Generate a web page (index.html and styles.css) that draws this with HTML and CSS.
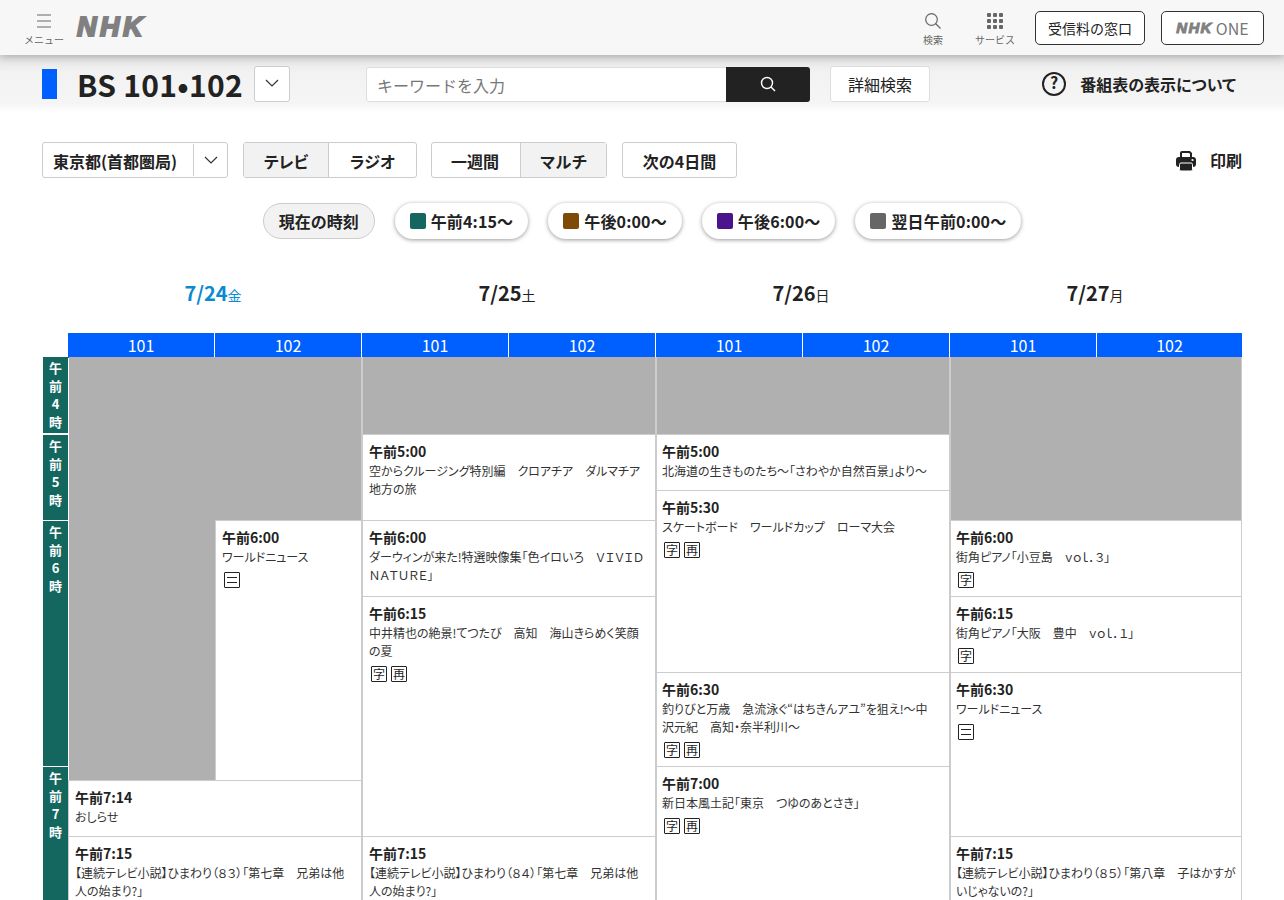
FILE: index.html
```html
<!DOCTYPE html>
<html lang="ja">
<head>
  <meta charset="UTF-8">
  <meta name="viewport" content="width=device-width, initial-scale=1">
  <title>番組表 BS 101・102</title>
  <link rel="stylesheet" href="styles.css">
</head>
<body>

  <header class="topbar">
    <a class="top-icon menu">
      <svg width="16" height="16" viewBox="0 0 16 16" fill="none" stroke="#666" stroke-width="1.2"><path d="M1 2h14M1 8h14M1 14h14"/></svg>
      <span>メニュー</span>
    </a>
    <a class="logo">NHK</a>
    <div class="top-right">
      <a class="top-icon search">
        <svg width="16" height="16" viewBox="0 0 16 16" fill="none" stroke="#666" stroke-width="1.2"><circle cx="6.500" cy="6.500" r="5.800"/><path d="M10.500 10.500l5 5"/></svg>
        <span>検索</span>
      </a>
      <a class="top-icon service">
        <svg width="16" height="16" viewBox="0 0 16 16" fill="#666"><rect x="0" y="0" width="4" height="4" rx="1"/><rect x="6" y="0" width="4" height="4" rx="1"/><rect x="12" y="0" width="4" height="4" rx="1"/><rect x="0" y="6" width="4" height="4" rx="1"/><rect x="6" y="6" width="4" height="4" rx="1"/><rect x="12" y="6" width="4" height="4" rx="1"/><rect x="0" y="12" width="4" height="4" rx="1"/><rect x="6" y="12" width="4" height="4" rx="1"/><rect x="12" y="12" width="4" height="4" rx="1"/></svg>
        <span>サービス</span>
      </a>
      <a class="top-btn fee">受信料の窓口</a>
      <a class="top-btn one"><b class="logo small">NHK</b>ONE</a>
    </div>
  </header>

  <section class="subbar">
    <span class="ch-mark"></span>
    <h1>BS 101•102</h1>
    <button class="ch-select">
      <svg class="chev" width="16" height="9" viewBox="0 0 16 9" fill="none" stroke="#333" stroke-width="1.2"><path d="M2 1l6 6 6-6"/></svg>
    </button>
    <div class="searchbox">
      <span class="placeholder">キーワードを入力</span>
      <button class="search-go">
        <svg width="16" height="16" viewBox="0 0 16 16" fill="none" stroke="#fff" stroke-width="1.4"><circle cx="7" cy="7" r="5.500"/><path d="M11 11l4 4"/></svg>
      </button>
    </div>
    <button class="detail">詳細検索</button>
    <a class="about">
      <svg width="24" height="24" viewBox="0 0 24 24" fill="none" stroke="#222" stroke-width="2"><circle cx="12" cy="12" r="11"/><text x="12" y="17" text-anchor="middle" class="about-q">?</text></svg>
      番組表の表示について
    </a>
  </section>

  <section class="filters">
    <div class="box area">
      <span class="area-name">東京都(首都圏局)</span>
      <span class="area-open">
        <svg width="16" height="9" viewBox="0 0 16 9" fill="none" stroke="#333" stroke-width="1.2"><path d="M2 1l6 6 6-6"/></svg>
      </span>
    </div>
    <div class="box seg media">
      <span class="on">テレビ</span>
      <span>ラジオ</span>
    </div>
    <div class="box seg range">
      <span>一週間</span>
      <span class="on">マルチ</span>
    </div>
    <div class="box seg next"><span>次の4日間</span></div>
    <a class="print">
      <svg width="20" height="21" viewBox="0 0 20 21"><path d="M5 8V3a1 1 0 0 1 1-1h7.500L15 3.500V8" fill="none" stroke="#222" stroke-width="2"/><rect x="0" y="7" width="20" height="10" rx="3" fill="#222"/><rect x="3.500" y="13" width="13" height="8" rx="1.500" fill="#222" stroke="#fff" stroke-width="1"/><circle cx="16.500" cy="10" r="1.100" fill="#fff"/></svg>
      印刷
    </a>
  </section>

  <nav class="jumps">
    <a class="pill now">現在の時刻</a>
    <a class="pill"><i class="sw green"></i>午前4:15〜</a>
    <a class="pill"><i class="sw brown"></i>午後0:00〜</a>
    <a class="pill"><i class="sw purple"></i>午後6:00〜</a>
    <a class="pill"><i class="sw gray"></i>翌日午前0:00〜</a>
  </nav>

  <div class="days">
    <div class="day today">7/24<small>金</small></div>
    <div class="day">7/25<small>土</small></div>
    <div class="day">7/26<small>日</small></div>
    <div class="day">7/27<small>月</small></div>
  </div>

  <div class="channels">
    <span>101</span><span>102</span>
    <span>101</span><span>102</span>
    <span>101</span><span>102</span>
    <span>101</span><span>102</span>
  </div>

  <main class="schedule">
    <div class="hour h4">午前4時</div>
    <div class="hour h5">午前5時</div>
    <div class="hour h6">午前6時</div>
    <div class="hour h7">午前7時</div>

    <!-- 7/24 -->
    <div class="none c1 a415 to714"></div>
    <div class="none c2 a415 to600"></div>
    <article class="prog c2 a600 to714">
      <h3>午前6:00</h3>
      <p>ワールドニュース</p>
      <div class="marks"><i class="mark two"><span></span></i></div>
    </article>
    <article class="prog d1 a714 to715">
      <h3>午前7:14</h3>
      <p>おしらせ</p>
    </article>
    <article class="prog d1 a715 toend">
      <h3>午前7:15</h3>
      <p>【連続テレビ小説】ひまわり（８３）「第七章　兄弟は他人の始まり?」</p>
    </article>

    <!-- 7/25 -->
    <div class="none d2 a415 to500"></div>
    <article class="prog d2 a500 to600">
      <h3>午前5:00</h3>
      <p>空からクルージング特別編　クロアチア　ダルマチア地方の旅</p>
    </article>
    <article class="prog d2 a600 to615">
      <h3>午前6:00</h3>
      <p>ダーウィンが来た!特選映像集「色イロいろ　ＶＩＶＩＤ　ＮＡＴＵＲＥ」</p>
    </article>
    <article class="prog d2 a615 to715">
      <h3>午前6:15</h3>
      <p>中井精也の絶景!てつたび　高知　海山きらめく笑顔の夏</p>
      <div class="marks"><i class="mark">字</i><i class="mark">再</i></div>
    </article>
    <article class="prog d2 a715 toend">
      <h3>午前7:15</h3>
      <p>【連続テレビ小説】ひまわり（８４）「第七章　兄弟は他人の始まり?」</p>
    </article>

    <!-- 7/26 -->
    <div class="none d3 a415 to500"></div>
    <article class="prog d3 a500 to530">
      <h3>午前5:00</h3>
      <p>北海道の生きものたち〜「さわやか自然百景」より〜</p>
    </article>
    <article class="prog d3 a530 to630">
      <h3>午前5:30</h3>
      <p>スケートボード　ワールドカップ　ローマ大会</p>
      <div class="marks"><i class="mark">字</i><i class="mark">再</i></div>
    </article>
    <article class="prog d3 a630 to700">
      <h3>午前6:30</h3>
      <p>釣りびと万歳　急流泳ぐ“はちきんアユ”を狙え!〜中沢元紀　高知・奈半利川〜</p>
      <div class="marks"><i class="mark">字</i><i class="mark">再</i></div>
    </article>
    <article class="prog d3 a700 toend">
      <h3>午前7:00</h3>
      <p>新日本風土記「東京　つゆのあとさき」</p>
      <div class="marks"><i class="mark">字</i><i class="mark">再</i></div>
    </article>

    <!-- 7/27 -->
    <div class="none d4 a415 to600"></div>
    <article class="prog d4 a600 to615">
      <h3>午前6:00</h3>
      <p>街角ピアノ「小豆島　ｖｏｌ．３」</p>
      <div class="marks"><i class="mark">字</i></div>
    </article>
    <article class="prog d4 a615 to630">
      <h3>午前6:15</h3>
      <p>街角ピアノ「大阪　豊中　ｖｏｌ．１」</p>
      <div class="marks"><i class="mark">字</i></div>
    </article>
    <article class="prog d4 a630 to715">
      <h3>午前6:30</h3>
      <p>ワールドニュース</p>
      <div class="marks"><i class="mark two"><span></span></i></div>
    </article>
    <article class="prog d4 a715 toend">
      <h3>午前7:15</h3>
      <p>【連続テレビ小説】ひまわり（８５）「第八章　子はかすがいじゃないの?」</p>
    </article>
  </main>

</body>
</html>
```

FILE: styles.css
```css
* {
  box-sizing: border-box;
}

html, body {
  height: 900px;
  overflow: hidden;
}

body {
  margin: 0;
  background: #fff;
  color: #222;
  font-family: "Noto Sans CJK JP", "Noto Sans", sans-serif;
  font-size: 16px;
}

button {
  font-family: inherit;
  cursor: pointer;
}

/* top bar */
.topbar {
  position: relative;
  z-index: 2;
  display: flex;
  align-items: center;
  height: 55px;
  padding: 0 20px 0 24px;
  background: #f7f7f7;
  box-shadow: 0 2px 8px rgba(0, 0, 0, 0.25);
}

.top-icon {
  display: flex;
  flex-direction: column;
  align-items: center;
  gap: 5px;
  color: #666;
  font-size: 10px;
  line-height: 12px;
}

.menu {
  width: 40px;
  margin-top: 3px;
}

.logo {
  margin-left: 13px;
  color: #808080;
  font-family: "Liberation Sans", sans-serif;
  font-size: 27px;
  font-weight: 700;
  font-style: italic;
  letter-spacing: 3.5px;
  -webkit-text-stroke: 2px #808080;
}

.logo.small {
  margin: 0 3px 0 0;
  font-size: 15px;
  letter-spacing: 1.3px;
  -webkit-text-stroke: 1px #808080;
}

.top-right {
  display: flex;
  align-items: center;
  margin-left: auto;
}

.search {
  width: 24px;
  margin-right: 30px;
  margin-top: 3px;
}

.service {
  width: 40px;
  margin-right: 20px;
  margin-top: 3px;
}

.top-btn {
  display: flex;
  align-items: center;
  justify-content: center;
  height: 34px;
  border: 1px solid #333;
  border-radius: 5px;
  background: #fff;
  font-size: 14px;
}

.fee {
  width: 110px;
  margin-right: 16px;
}

.one {
  width: 103px;
  color: #777;
  font-size: 16px;
}

/* channel bar */
.subbar {
  display: flex;
  align-items: center;
  height: 57px;
  padding: 0 48px 0 42px;
  background: linear-gradient(#e4e4e4, #f2f2f2 30%, #f5f5f5 85%, #fff);
}

.ch-mark {
  width: 15px;
  height: 30px;
  background: #0060ff;
}

.subbar h1 {
  margin: 0 0 0 20px;
  font-size: 30px;
  font-weight: 700;
  letter-spacing: 0.3px;
  line-height: 36px;
  white-space: nowrap;
}

.ch-select {
  display: flex;
  align-items: center;
  justify-content: center;
  width: 36px;
  height: 36px;
  margin-left: 11px;
  padding: 0;
  border: 1px solid #ccc;
  border-radius: 3px;
  background: #fff;
}

.searchbox {
  display: flex;
  width: 444px;
  height: 35px;
  margin: 1px 0 0 76px;
  border: 1px solid #ddd;
  border-radius: 3px;
  background: #fff;
}

.placeholder {
  flex: 1;
  padding: 0 10px;
  color: #777;
  font-size: 16px;
  line-height: 35px;
}

.search-go {
  display: flex;
  align-items: center;
  justify-content: center;
  width: 84px;
  margin: -1px;
  padding: 0;
  border: none;
  border-radius: 0 3px 3px 0;
  background: #222;
}

.detail {
  width: 100px;
  height: 36px;
  margin-left: 20px;
  border: 1px solid #ddd;
  border-radius: 3px;
  background: #fff;
  color: #222;
  font-size: 16px;
}

.about {
  display: flex;
  align-items: center;
  gap: 14px;
  margin-left: auto;
  font-weight: 700;
  font-feature-settings: "palt";
  white-space: nowrap;
}

.about svg {
  overflow: visible;
}

.about-q {
  fill: #222;
  stroke: none;
  font-size: 16px;
  font-weight: 700;
}

/* filter row */
.filters {
  display: flex;
  align-items: center;
  height: 36px;
  margin-top: 30px;
  padding: 0 42px;
}

.box {
  display: flex;
  height: 36px;
  border: 1px solid #ccc;
  border-radius: 3px;
  font-weight: 700;
  line-height: 36px;
}

.area {
  width: 186px;
}

.area-name {
  width: 150px;
  padding-left: 10px;
  white-space: nowrap;
}

.area-open {
  display: flex;
  align-items: center;
  justify-content: center;
  flex: 1;
  margin: 1px 0;
  border-left: 1px solid #ccc;
}

.seg span {
  flex: 1;
  text-align: center;
}

.seg span + span {
  border-left: 1px solid #ccc;
}

.seg .on {
  background: #f2f2f2;
}

.media {
  width: 174px;
  margin-left: 15px;
  font-feature-settings: "palt";
}

.media span:first-child {
  flex: none;
  width: 84px;
}

.range {
  width: 176px;
  margin-left: 14px;
}

.range span:first-child {
  flex: none;
  width: 88px;
  padding-right: 2px;
}

.next {
  width: 115px;
  margin-left: 15px;
}

.print {
  display: flex;
  align-items: center;
  gap: 14px;
  margin-left: auto;
  font-weight: 700;
}

/* time jump pills */
.jumps {
  display: flex;
  justify-content: center;
  gap: 20px;
  margin-top: 25px;
}

.pill {
  display: flex;
  align-items: center;
  height: 36px;
  padding: 0 15px;
  border-radius: 18px;
  background: #fff;
  box-shadow: 0 1px 4px rgba(0, 0, 0, 0.4);
  font-weight: 700;
  letter-spacing: 0.15px;
  white-space: nowrap;
}

.pill.now {
  border: 1px solid #ccc;
  background: #f2f2f2;
  box-shadow: none;
  letter-spacing: 0;
}

.sw {
  width: 16px;
  height: 16px;
  margin-right: 5px;
  border-radius: 2px;
}

.green { background: #14675f; }
.brown { background: #7f4a05; }
.purple { background: #4a148c; }
.gray { background: #666; }

/* days */
.days {
  display: grid;
  grid-template-columns: repeat(4, 294px);
  height: 32px;
  margin: 38px 0 0 66px;
}

.day {
  text-align: center;
  font-size: 20px;
  font-weight: 700;
  line-height: 32px;
}

.day small {
  font-size: 14px;
  font-weight: 400;
}

.today {
  color: #0a8ad0;
}

.channels {
  display: grid;
  grid-template-columns: repeat(7, 147px) 145px;
  height: 24px;
  margin: 24px 0 0 68px;
}

.channels span {
  border-right: 1px solid #fff;
  background: #0060ff;
  color: #fff;
  text-align: center;
  font-size: 16px;
  line-height: 25px;
}

.channels span:last-child {
  border-right: none;
}

/* schedule grid, row heights follow the program blocks */
.schedule {
  display: grid;
  grid-template-columns: 26px repeat(7, 147px) 145px;
  grid-template-rows:
    [t415] 77px [t500] 56px [t530] 30px [t600] 76px [t615] 76px [t630]
    94px [t700] 14px [t714] 56px [t715] 120px [tend];
  margin: 0 42px;
}

.hour {
  width: 25px;
  margin-top: 1px;
  margin-left: 1px;
  padding: 2px 5px 0;
  background: #14675f;
  color: #fff;
  text-align: center;
  font-size: 13px;
  font-weight: 700;
  line-height: 18px;
  word-break: break-all;
}

.h4 { grid-column: 1; grid-row: t415 / t500; margin-top: 0; margin-bottom: 1px; }
.h5 { grid-column: 1; grid-row: t500 / t600; }
.h6 { grid-column: 1; grid-row: t600 / t700; }
.h7 { grid-column: 1; grid-row: t700 / tend; }

.c1 { grid-column: 2; }
.c2 { grid-column: 3; }
.d1 { grid-column: 2 / span 2; }
.d2 { grid-column: 4 / span 2; }
.d3 { grid-column: 6 / span 2; }
.d4 { grid-column: 8 / span 2; }

.a415 { grid-row-start: t415; }
.a500 { grid-row-start: t500; }
.a530 { grid-row-start: t530; }
.a600 { grid-row-start: t600; }
.a615 { grid-row-start: t615; }
.a630 { grid-row-start: t630; }
.a700 { grid-row-start: t700; }
.a714 { grid-row-start: t714; }
.a715 { grid-row-start: t715; }

.to500 { grid-row-end: t500; }
.to530 { grid-row-end: t530; }
.to600 { grid-row-end: t600; }
.to615 { grid-row-end: t615; }
.to630 { grid-row-end: t630; }
.to700 { grid-row-end: t700; }
.to714 { grid-row-end: t714; }
.to715 { grid-row-end: t715; }
.toend { grid-row-end: tend; }

.none {
  background: #b0b0b0;
}

.none.c1 {
  margin-left: 1px;
}

.none.d2, .none.d3, .none.d4 {
  margin-left: -1px;
  border-left: 2px solid #ccc;
}

.none.d4, .prog.d4 {
  border-right: 1px solid #ccc;
}

.prog {
  overflow: hidden;
  padding: 6px 6px 0;
  border-top: 1px solid #ccc;
  border-left: 1px solid #ccc;
  background: #fff;
}

.prog.d2, .prog.d3, .prog.d4 {
  margin-left: -1px;
  border-left-width: 2px;
}

.prog.d3, .prog.d4 {
  padding-left: 5px;
}

.prog.d3 {
  padding-right: 13px;
}

.prog.d4 {
  padding-right: 2px;
}

.prog h3 {
  margin: 0;
  font-size: 14px;
  font-weight: 700;
  line-height: 21px;
}

.prog p {
  margin: 0;
  color: #333;
  font-size: 12px;
  font-feature-settings: "palt";
  line-height: 18px;
}

.marks {
  display: flex;
  gap: 4px;
  margin: 6px 0 0 2px;
}

.mark {
  display: flex;
  align-items: center;
  justify-content: center;
  width: 16px;
  height: 16px;
  border: 1px solid #222;
  border-radius: 1px;
  font-size: 12px;
  font-style: normal;
  line-height: 14px;
}

.mark.two span {
  width: 10px;
  height: 6px;
  border-top: 1px solid #222;
  border-bottom: 1px solid #222;
}
```
